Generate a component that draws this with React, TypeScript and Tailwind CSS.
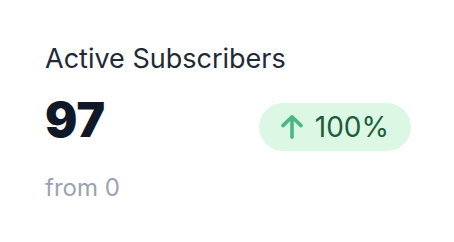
export default function App() {
  return (
    <div className="w-[454px] h-[242px] bg-white px-[45px] pt-[41px] font-['Inter',sans-serif]">
      <p className="text-[27px] leading-[36px] text-[#1f2937]">Active Subscribers</p>
      <div className="mt-[19px] flex items-baseline justify-between">
        <span className="text-[48px] leading-none font-black text-[#111827]">97</span>
        <span className="-mr-[2px] inline-flex items-baseline gap-[12px] rounded-full bg-[#dcf8e5] pl-[22px] pr-[22px] py-[9px] text-[28px] leading-[30px] text-[#1e5c3c]">
          <svg viewBox="0 0 22 24" className="h-[24px] w-[22px] self-center" fill="none" stroke="#4cb782" strokeWidth="3.6" strokeLinecap="round" strokeLinejoin="round">
            <path d="M11 22.2V2M2 10.6L11 1.8L20 10.6" />
          </svg>
          100%
        </span>
      </div>
      <p className="mt-[21px] text-[24px] leading-[32px] text-[#9ca3af]">from 0</p>
    </div>
  );
}
